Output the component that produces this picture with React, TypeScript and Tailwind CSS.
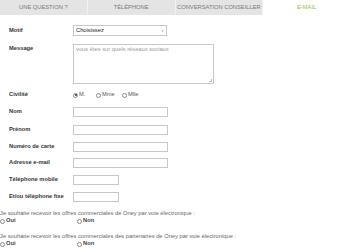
import React from 'react';

const tabs = ['UNE QUESTION ?', 'TÉLÉPHONE', 'CONVERSATION CONSEILLER', 'E-MAIL'];

const Radio = ({ checked = false }: { checked?: boolean }) => (
  <span className="inline-flex w-[5px] h-[5px] rounded-full border border-[#8a8a8a] bg-white items-center justify-center shrink-0">
    {checked && <span className="w-[2px] h-[2px] rounded-full bg-[#333]" />}
  </span>
);

const Row = ({ label, mt, h, children }: { label: string; mt: string; h: string; children?: React.ReactNode }) => (
  <div className={`flex items-center ${mt} ${h}`}>
    <div className="w-[73px] pl-[9px] font-bold text-[#333]">{label}</div>
    {children}
  </div>
);

const Input = ({ w }: { w: string }) => (
  <div className={`${w} h-full border border-[#c8c8c8] bg-white`} />
);

const App = () => {
  return (
    <div
      className="w-[350px] h-[250px] overflow-hidden bg-white text-[5.75px] leading-none"
      style={{ fontFamily: '"Liberation Sans", Arial, sans-serif' }}
    >
      {/* Tabs */}
      <div className="flex h-[15px] bg-[#e4e4e4]">
        {tabs.map((t, i) => (
          <div
            key={t}
            className={`flex-1 flex items-center justify-center ${i > 0 ? 'border-l border-[#f2f2f2]' : ''} ${
              i === 3 ? 'bg-white text-[#8dc63f]' : 'text-[#7a7a7a]'
            }`}
          >
            {t}
          </div>
        ))}
      </div>

      <div className="flex flex-col">
        <Row label="Motif" mt="mt-[10px]" h="h-[11px]">
          <div className="w-[94px] h-full border border-[#c8c8c8] bg-white flex items-center justify-between px-[2px] text-[#222]">
            <span>Choisissez</span>
            <span className="text-[#999] text-[4px]">∨</span>
          </div>
        </Row>

        <div className="flex mt-[8px] h-[40px]">
          <div className="w-[73px] pl-[9px] pt-[2px] font-bold text-[#333]">Message</div>
          <div className="relative w-[141px] h-full border border-[#c8c8c8] bg-white px-[2px] pt-[2px] text-[#999]">
            vous êtes sur quels réseaux sociaux
            <span className="absolute right-[1px] bottom-[1px] w-[3px] h-[3px] border-r border-b border-[#bbb]" />
          </div>
        </div>

        <Row label="Civilité" mt="mt-[7px]" h="h-[8px]">
          <div className="flex items-center text-[#555]">
            <Radio checked />
            <span className="ml-[1px] w-[17px]">M.</span>
            <Radio />
            <span className="ml-[1px] w-[20px]">Mme</span>
            <Radio />
            <span className="ml-[1px]">Mlle</span>
          </div>
        </Row>

        <Row label="Nom" mt="mt-[8px]" h="h-[10px]"><Input w="w-[95px]" /></Row>
        <Row label="Prénom" mt="mt-[8px]" h="h-[10px]"><Input w="w-[95px]" /></Row>
        <Row label="Numéro de carte" mt="mt-[7px]" h="h-[10px]"><Input w="w-[95px]" /></Row>
        <Row label="Adresse e-mail" mt="mt-[6px]" h="h-[10px]"><Input w="w-[95px]" /></Row>
        <Row label="Téléphone mobile" mt="mt-[7px]" h="h-[10px]"><Input w="w-[46px]" /></Row>
        <Row label="Et/ou téléphone fixe" mt="mt-[7px]" h="h-[10px]"><Input w="w-[46px]" /></Row>

        <div className="mt-[8px] h-[7px] flex items-center text-[#666] whitespace-nowrap">
          Je souhaite recevoir les offres commerciales de Oney par voie électronique :
        </div>
        <div className="h-[8px] flex items-center font-bold text-[#444]">
          <div className="w-[77px] flex items-center gap-[1px]"><Radio /><span>Oui</span></div>
          <div className="flex items-center gap-[1px]"><Radio /><span>Non</span></div>
        </div>

        <div className="mt-[8px] h-[7px] flex items-center text-[#666] whitespace-nowrap">
          Je souhaite recevoir les offres commerciales des partenaires de Oney par voie électronique :
        </div>
        <div className="h-[8px] flex items-center font-bold text-[#444]">
          <div className="w-[77px] flex items-center gap-[1px]"><Radio /><span>Oui</span></div>
          <div className="flex items-center gap-[1px]"><Radio /><span>Non</span></div>
        </div>
      </div>
    </div>
  );
};

export default App;
